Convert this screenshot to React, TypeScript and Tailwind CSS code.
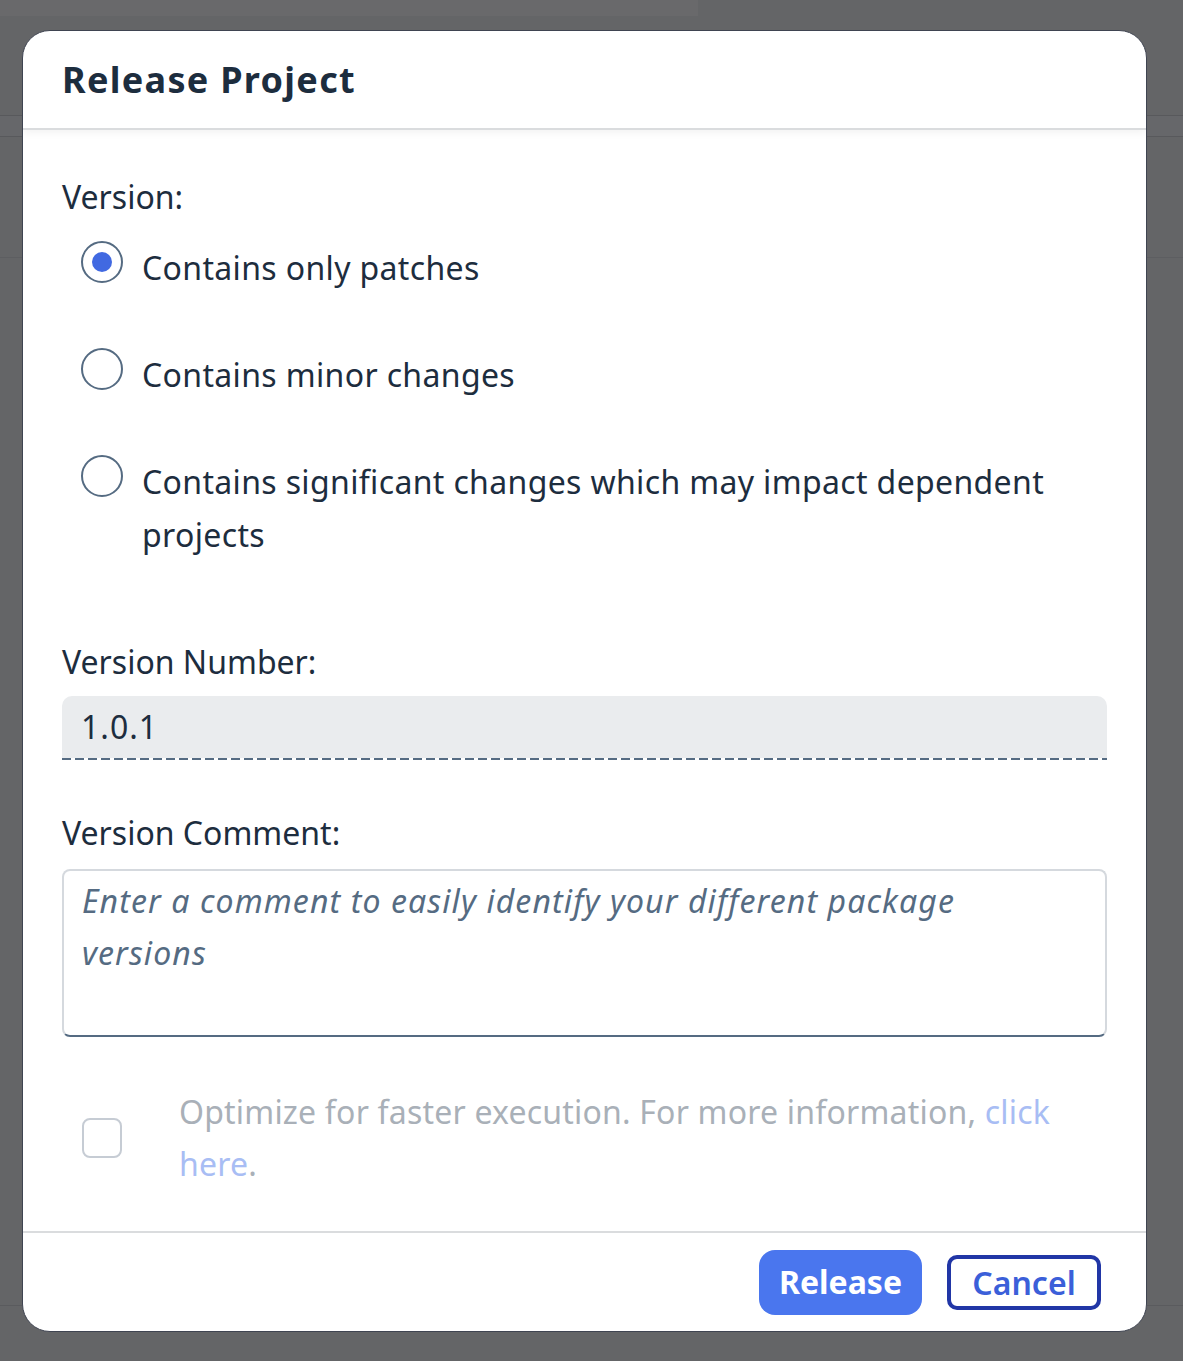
import React, { FC } from 'react'

const font = { fontFamily: '"Noto Sans", "Open Sans", sans-serif' }

const Radio: FC<{ checked?: boolean; children: React.ReactNode }> = ({ checked, children }) => (
  <label className="flex items-start">
    <span className="ml-[19px] flex h-[42px] w-[42px] shrink-0 items-center justify-center rounded-full border-2 border-[#556b82] bg-white">
      {checked && <span className="h-[20px] w-[20px] rounded-full bg-[#4169e1]" />}
    </span>
    <span className="ml-[19px] text-[32px] leading-[53px] tracking-[0.35px] text-[#1d2d3e]">{children}</span>
  </label>
)

const App: FC = () => {
  return (
    <div className="relative h-[1361px] w-[1183px] overflow-hidden bg-[#646567]" style={font}>
      {/* page behind the overlay */}
      <div className="flex h-full flex-col">
        <div className="h-[16px] w-[698px] bg-[#69696b]" />
        <div className="h-[99px]" />
        <div className="h-[22px] border-y border-[#58595c] bg-[#66676a]" />
        <div className="h-[121px] border-b border-[#5d5e61]" />
        <div className="h-[1048px] border-b border-[#5a5b5e]" />
        <div className="flex-1" />
      </div>

      {/* dialog */}
      <div className="absolute left-[22px] top-[30px] flex h-[1302px] w-[1125px] flex-col overflow-hidden rounded-[28px] border border-[#3f4451] bg-white">
        <div className="relative z-10 flex h-[99px] shrink-0 items-center border-b-2 border-[#dadcde] px-[39px] shadow-[0_3px_8px_rgba(0,0,0,0.05)]">
          <h1 className="text-[36px] font-bold tracking-[1.3px] text-[#1d2d3e]">Release Project</h1>
        </div>

        <div className="flex-1 px-[39px] pt-[45px]">
          <div className="text-[32px] leading-[44px] text-[#1d2d3e]">Version:</div>
          <div className="mt-[22px] flex flex-col gap-[54px]">
            <Radio checked>Contains only patches</Radio>
            <Radio>Contains minor changes</Radio>
            <Radio>Contains significant changes which may impact dependent projects</Radio>
          </div>

          <div className="mt-[79px] text-[32px] leading-[44px] text-[#1d2d3e]">Version Number:</div>
          <div className="mt-[12px] flex flex-col">
            <div className="flex h-[62px] items-center rounded-t-[10px] bg-[#eaecee] px-[19px] text-[32px] tracking-[1px] text-[#1d2d3e]">
              1.0.1
            </div>
            <div className="h-[2px] bg-[repeating-linear-gradient(to_right,#556b82_0_9px,transparent_9px_13px)]" />
          </div>

          <div className="mt-[51px] text-[32px] leading-[44px] text-[#1d2d3e]">Version Comment:</div>
          <div className="mt-[14px] h-[168px] rounded-[8px] border-2 border-[#d5d9de] border-b-[#556b82] px-[18px] pt-[4px]">
            <p className="pr-[100px] text-[32px] italic leading-[52px] tracking-[1.1px] text-[#556b82]">
              Enter a comment to easily identify your different package versions
            </p>
          </div>

          <div className="mt-[49px] flex items-center">
            <span className="ml-[20px] h-[40px] w-[40px] shrink-0 rounded-[8px] border-2 border-[#c6ccd4]" />
            <p className="ml-[57px] text-[32px] leading-[52px] tracking-[0.2px] text-[#a9b0b8]">
              Optimize for faster execution. For more information,{' '}
              <a className="text-[#a8bdf4]">click here</a>.
            </p>
          </div>
        </div>

        <div className="flex h-[100px] shrink-0 items-center justify-end gap-[25px] border-t-2 border-[#dadcde] pr-[45px]">
          <button className="h-[65px] w-[163px] rounded-[16px] bg-[#4a76ee] text-[32px] font-bold text-white">
            Release
          </button>
          <button className="h-[55px] w-[154px] rounded-[10px] border-4 border-[#2136a6] text-[32px] font-semibold text-[#3b5fd9]">
            Cancel
          </button>
        </div>
      </div>
    </div>
  )
}

export default App
